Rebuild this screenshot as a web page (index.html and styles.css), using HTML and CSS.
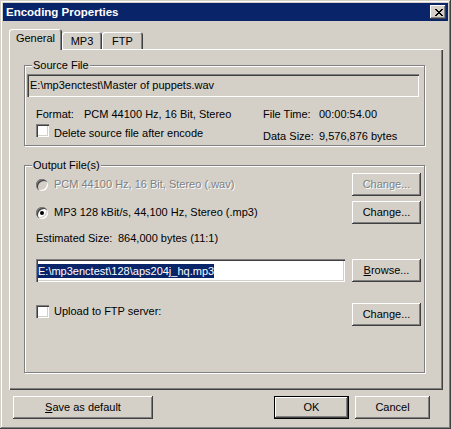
FILE: index.html
```html
<!DOCTYPE html>
<html>
<head>
<meta charset="utf-8">
<title>Encoding Properties</title>
<link rel="stylesheet" href="styles.css">
</head>
<body>
<div class="window">
  <div class="titlebar">
    <span class="title">Encoding Properties</span>
    <button class="close" aria-label="Close">
      <svg width="8" height="7" viewBox="0 0 8 7"><path d="M0 0h2v1H0zM6 0h2v1H6zM1 1h2v1H1zM5 1h2v1H5zM2 2h4v1H2zM3 3h2v1H3zM2 4h4v1H2zM1 5h2v1H1zM5 5h2v1H5zM0 6h2v1H0zM6 6h2v1H6z" fill="#000"/></svg>
    </button>
  </div>
  <div class="content">
    <div class="tabs">
      <div class="tab tab-general active">General</div>
      <div class="tab tab-mp3">MP3</div>
      <div class="tab tab-ftp">FTP</div>
    </div>
    <div class="panel">
      <div class="group group-source">
        <div class="group-title">Source File</div>
        <div class="ro-field">E:\mp3enctest\Master of puppets.wav</div>
        <div class="info-grid">
          <span>Format:</span>
          <span>PCM 44100 Hz, 16 Bit, Stereo</span>
          <span>File Time:</span>
          <span>00:00:54.00</span>
          <label class="check check-delete"><span class="checkbox"></span><span>Delete source file after encode</span></label>
          <span class="row2">Data Size:</span>
          <span class="row2">9,576,876 bytes</span>
        </div>
      </div>
      <div class="group group-output">
        <div class="group-title">Output File(s)</div>
        <div class="opt-row row-wav">
          <label class="radio-label disabled"><span class="radio"></span><span class="dis-text">PCM 44100 Hz, 16 Bit, Stereo (.wav)</span></label>
          <div class="btn disabled"><span class="dis-text">Change...</span></div>
        </div>
        <div class="opt-row row-mp3">
          <label class="radio-label"><span class="radio checked"></span><span>MP3 128 kBit/s, 44,100 Hz, Stereo (.mp3)</span></label>
          <div class="btn">Change...</div>
        </div>
        <div class="opt-row row-est">
          <span class="est-label">Estimated Size:</span>
          <span class="est-value">864,000 bytes (11:1)</span>
        </div>
        <div class="opt-row row-file">
          <div class="text-field"><span class="selected">E:\mp3enctest\128\aps204j_hq.mp3</span></div>
          <div class="btn"><span><u>B</u>rowse...</span></div>
        </div>
        <div class="opt-row row-ftp">
          <label class="check check-ftp"><span class="checkbox"></span><span>Upload to FTP server:</span></label>
          <div class="btn">Change...</div>
        </div>
      </div>
    </div>
    <div class="footer">
      <div class="btn btn-save"><span><u>S</u>ave as default</span></div>
      <div class="btn btn-ok">OK</div>
      <div class="btn btn-cancel">Cancel</div>
    </div>
  </div>
</div>
</body>
</html>
```
FILE: styles.css
```css
* { box-sizing: border-box; }

html, body {
  margin: 0;
  padding: 0;
}

body {
  width: 451px;
  height: 429px;
  font-family: "Liberation Sans", Arial, sans-serif;
  font-size: 11px;
  line-height: 13px;
  color: #000;
  background: #d4d0c8;
}

.window {
  width: 451px;
  height: 429px;
  padding: 3px;
  background: #d4d0c8;
  box-shadow: inset -1px -1px #404040, inset 1px 1px #d4d0c8, inset -2px -2px #808080, inset 2px 2px #fff;
  display: flex;
  flex-direction: column;
}

.titlebar {
  height: 18px;
  background: #0a246a;
  display: flex;
  align-items: center;
  justify-content: space-between;
  padding: 0 2px 0 3px;
}

.title {
  color: #fff;
  font-weight: bold;
  font-size: 11.5px;
}

.close {
  width: 16px;
  height: 14px;
  padding: 0;
  border: 0;
  background: #d4d0c8;
  box-shadow: inset -1px -1px #404040, inset 1px 1px #fff, inset -2px -2px #808080;
  display: flex;
  align-items: center;
  justify-content: center;
}

.close svg { display: block; margin-left: 1px; }

.content {
  flex: 1;
  display: flex;
  flex-direction: column;
  padding: 8px 0 0 6px;
}

.tabs {
  display: flex;
  align-items: flex-end;
  height: 21px;
  margin-bottom: -1px;
  position: relative;
  z-index: 1;
}

.tab {
  height: 17px;
  margin-bottom: 1px;
  padding-top: 3px;
  text-align: center;
  background: #d4d0c8;
  border-radius: 3px 3px 0 0;
  box-shadow: inset 1px 1px #fff, inset -1px 0 #404040, inset -2px 0 #808080;
}

.tab.active {
  height: 21px;
  margin-bottom: 0;
}

.tab-general { width: 53px; }
.tab-mp3 { width: 40px; }
.tab-ftp { width: 41px; }

.panel {
  width: 434px;
  height: 341px;
  background: #d4d0c8;
  box-shadow: inset 1px 1px #fff, inset -1px -1px #404040, inset -2px -2px #808080;
  padding: 16px 0 0 15px;
  display: flex;
  flex-direction: column;
}

.group {
  width: 401px;
  border: 1px solid #808080;
  box-shadow: inset 1px 1px #fff, 1px 1px #fff;
  display: flex;
  flex-direction: column;
}

.group-source { height: 81px; }

.group-output {
  height: 208px;
  margin-top: 19px;
}

.group-title {
  align-self: flex-start;
  margin: -7px 0 0 7px;
  padding: 0 1px;
  background: #d4d0c8;
}

.ro-field {
  margin: 2px 0 0 2px;
  width: 392px;
  height: 23px;
  padding: 0 3px;
  display: flex;
  align-items: center;
  box-shadow: inset 1px 1px #808080, inset 2px 2px #404040, inset -1px -1px #fff, inset -2px -2px #d4d0c8;
}

.info-grid {
  margin: 11px 0 0 11px;
  display: grid;
  grid-template-columns: 48px 179px 56px auto;
  row-gap: 9px;
}

.check {
  display: flex;
  align-items: flex-start;
  gap: 5px;
}

.check-delete {
  grid-column: 1 / 3;
  margin-top: -3px;
}

.checkbox {
  width: 13px;
  height: 13px;
  flex: none;
  background: #fff;
  box-shadow: inset 1px 1px #808080, inset 2px 2px #404040, inset -1px -1px #fff, inset -2px -2px #d4d0c8;
}

.check-delete .checkbox { margin-top: -3px; }

.opt-row {
  height: 23px;
  display: flex;
  align-items: center;
  justify-content: space-between;
  padding: 0 3px 0 11px;
}

.row-wav { margin-top: 1px; }
.row-mp3 { margin-top: 5px; }
.row-est {
  height: 13px;
  margin-top: 8px;
  justify-content: flex-start;
}
.row-file { margin-top: 14px; }
.row-ftp {
  margin-top: 21px;
  align-items: flex-start;
}

.check-ftp { margin-top: 2px; }

.est-label { width: 82px; }

.radio-label {
  display: flex;
  align-items: center;
  gap: 6px;
}

.radio {
  width: 12px;
  height: 12px;
  flex: none;
  border-radius: 50%;
  background: #fff;
  box-shadow: inset 1px 1px #808080, inset 2px 2px #404040, inset -1px -1px #fff, inset -2px -2px #d4d0c8;
  display: flex;
  align-items: center;
  justify-content: center;
}

.radio-label.disabled .radio { background: #d4d0c8; }

.radio.checked::after {
  content: "";
  width: 4px;
  height: 4px;
  border-radius: 50%;
  background: #000;
}

.dis-text {
  color: #808080;
  text-shadow: 1px 1px #fff;
}

.text-field {
  width: 309px;
  height: 23px;
  background: #fff;
  padding: 0 2px;
  display: flex;
  align-items: center;
  box-shadow: inset 1px 1px #808080, inset 2px 2px #404040, inset -1px -1px #fff, inset -2px -2px #d4d0c8;
}

.selected {
  background: #0a246a;
  color: #fff;
  line-height: 14px;
}

.btn {
  width: 69px;
  height: 23px;
  background: #d4d0c8;
  box-shadow: inset -1px -1px #404040, inset 1px 1px #fff, inset -2px -2px #808080;
  display: flex;
  align-items: center;
  justify-content: center;
  flex: none;
}

.footer {
  width: 434px;
  display: flex;
  margin-top: 6px;
  padding: 0 13px 0 4px;
}

.btn-save { width: 140px; }

.btn-ok {
  width: 75px;
  margin-left: auto;
  box-shadow: inset 0 0 0 1px #000, inset -2px -2px #404040, inset 2px 2px #fff, inset -3px -3px #808080;
}

.btn-cancel {
  width: 75px;
  margin-left: 6px;
}
```
